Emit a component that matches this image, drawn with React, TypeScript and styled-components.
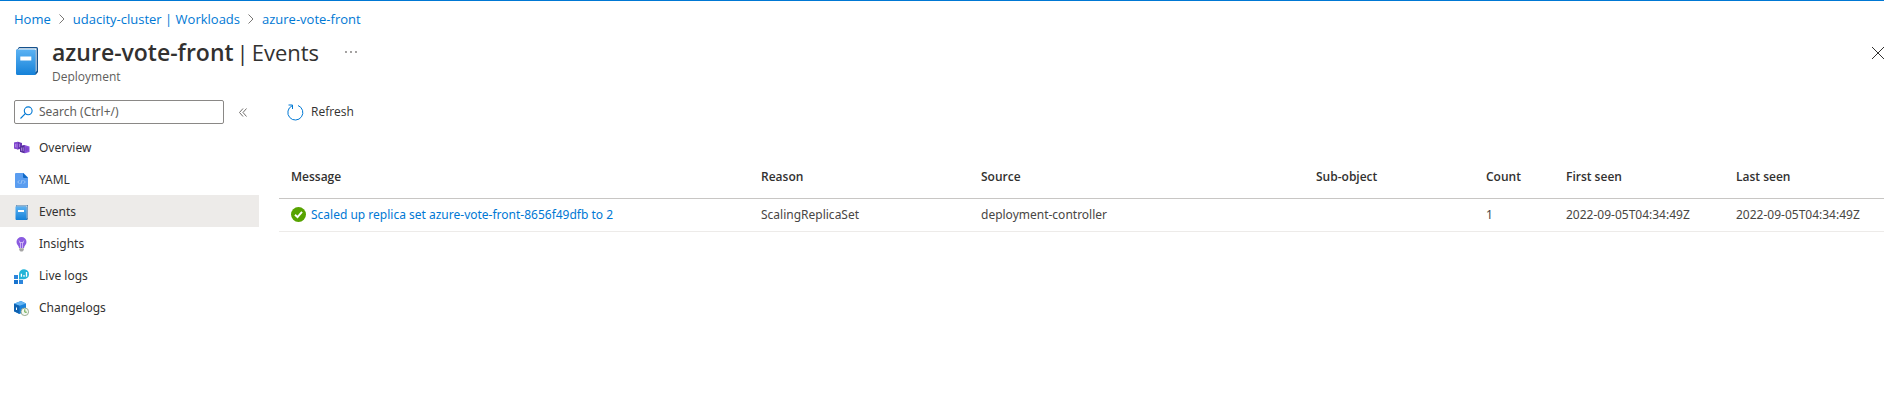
import React from 'react';
import styled, { createGlobalStyle } from 'styled-components';

const compactFont = "'Open Sans', 'Noto Sans', sans-serif";

const GlobalStyle = createGlobalStyle`
  *, *::before, *::after { box-sizing: border-box; }
  body {
    margin: 0;
    background: #fff;
    color: #323130;
    font-family: 'Noto Sans', 'Open Sans', sans-serif;
    font-size: 12px;
    line-height: 16px;
  }
  button, input { font: inherit; color: inherit; }
  svg { display: block; flex: none; }
  a { color: #0078d4; text-decoration: none; }
  a:hover { text-decoration: underline; }
`;

const Blade = styled.div`
  border-top: 1px solid #0078d4;
  overflow: hidden;
`;

const Breadcrumb = styled.nav`
  display: flex;
  align-items: center;
  gap: 8px;
  padding: 10px 14px 0;
  font-family: ${compactFont};
  font-size: 13px;
`;

const Header = styled.header`
  display: flex;
  align-items: flex-start;
  padding: 9px 0 0 16px;
`;

const HeaderIcon = styled.div`
  padding-top: 11px;
  width: 36px;
`;

const HeaderText = styled.div`
  flex: 1;
  font-family: ${compactFont};
`;

const TitleRow = styled.div`
  display: flex;
  align-items: center;
  gap: 26px;
`;

const Title = styled.h1`
  display: flex;
  gap: 3px;
  margin: 0;
  font-size: 22px;
  line-height: 32px;
  font-weight: 400;
`;

const TitleName = styled.span`
  font-size: 23px;
  font-weight: 600;
`;

const Subtitle = styled.div`
  line-height: 18px;
  color: #605e5c;
`;

const IconButton = styled.button`
  display: flex;
  padding: 0;
  border: 0;
  background: none;
  cursor: pointer;
`;

const CloseButton = styled(IconButton)`
  margin-top: 11px;
`;

const Body = styled.div`
  display: flex;
  gap: 20px;
  padding-top: 14px;
`;

const Sidebar = styled.aside`
  width: 259px;
  flex: none;
`;

const SearchRow = styled.div`
  display: flex;
  align-items: center;
  gap: 15px;
  padding-left: 14px;
`;

const SearchBox = styled.label`
  display: flex;
  align-items: center;
  gap: 6px;
  width: 210px;
  height: 24px;
  padding: 0 5px;
  border: 1px solid #8a8886;
  border-radius: 2px;
`;

const SearchInput = styled.input`
  flex: 1;
  min-width: 0;
  padding: 0;
  border: 0;
  outline: 0;
  background: none;
  &::placeholder { color: #605e5c; opacity: 1; }
`;

const Menu = styled.ul`
  margin: 0;
  padding: 7px 0 0;
  list-style: none;
`;

const MenuLink = styled.a<{ $active?: boolean }>`
  display: flex;
  align-items: center;
  gap: 9px;
  height: 32px;
  padding: 2px 0 0 13px;
  color: #323130;
  background: ${(p) => (p.$active ? '#edebe9' : 'transparent')};
`;

const Content = styled.main`
  flex: 1;
  min-width: 0;
`;

const Toolbar = styled.div`
  display: flex;
  height: 24px;
  padding-left: 8px;
`;

const ToolbarButton = styled(IconButton)`
  align-items: center;
  gap: 7px;
  font-family: ${compactFont};
`;

const Table = styled.table`
  width: 100%;
  margin-top: 32px;
  table-layout: fixed;
  border-collapse: collapse;
`;

const Column = styled.col<{ $width?: number }>`
  width: ${(p) => (p.$width ? `${p.$width}px` : 'auto')};
`;

const Th = styled.th`
  height: 42px;
  padding: 0 0 0 12px;
  text-align: left;
  font-family: ${compactFont};
  font-weight: 600;
  white-space: nowrap;
  border-bottom: 1px solid #c8c6c4;
`;

const Td = styled.td`
  height: 33px;
  padding: 0 0 0 12px;
  white-space: nowrap;
  color: #484644;
  border-bottom: 1px solid #edebe9;
`;

const Message = styled.span`
  display: flex;
  align-items: center;
  gap: 5px;
`;

const ChevronIcon = () => (
  <svg width="6" height="10" viewBox="0 0 6 10" fill="none" stroke="#797775" aria-hidden="true">
    <path d="M0.500 0.500 5 5 0.500 9.500" />
  </svg>
);

const BookIcon = ({ width, height }: { width: number; height: number }) => (
  <svg width={width} height={height} viewBox="0 0 22 28" aria-hidden="true">
    <defs>
      <linearGradient id="book" x1="0" y1="0" x2="0" y2="1">
        <stop offset="0" stopColor="#5bb2f3" />
        <stop offset="1" stopColor="#1581d8" />
      </linearGradient>
    </defs>
    <path d="M3 0H20.500a1.500 1.500 0 0 1 1.500 1.500V25l-2 2.500H1V3Z" fill="#15518c" />
    <path d="M3.200 1.200H20.600V24l-1.200 1.500V3H1.500Z" fill="#f3f8fc" />
    <path d="M0 2.600H18.500a1 1 0 0 1 1 1V28H1.500A1.500 1.500 0 0 1 0 26.500Z" fill="url(#book)" />
    <rect x="4.300" y="9.500" width="11" height="4" fill="#fff" />
  </svg>
);

const MoreIcon = () => (
  <svg width="12" height="4" viewBox="0 0 12 4" fill="#797775" aria-hidden="true">
    <circle cx="1" cy="2" r="0.900" />
    <circle cx="6" cy="2" r="0.900" />
    <circle cx="11" cy="2" r="0.900" />
  </svg>
);

const CloseIcon = () => (
  <svg width="12" height="12" viewBox="0 0 12 12" fill="none" stroke="#323130" aria-hidden="true">
    <path d="M0 0 12 12M12 0 0 12" />
  </svg>
);

const SearchIcon = () => (
  <svg width="13" height="13" viewBox="0 0 13 13" fill="none" stroke="#0078d4" strokeWidth="1.100" aria-hidden="true">
    <circle cx="8.200" cy="4.800" r="3.900" />
    <path d="M5.300 7.700 0.500 12.500" />
  </svg>
);

const CollapseIcon = () => (
  <svg width="8" height="9" viewBox="0 0 8 9" fill="none" stroke="#605e5c" strokeWidth="0.900" aria-hidden="true">
    <path d="M4 0.500 0.500 4.500 4 8.500M7.500 0.500 4 4.500 7.500 8.500" />
  </svg>
);

const RefreshIcon = () => (
  <svg width="17" height="17" viewBox="0 0 17 17" fill="none" stroke="#0078d4" aria-hidden="true">
    <path d="M11 1.500A7.500 7.500 0 1 1 5 1.800" />
    <path d="M1.500 1H5.500V5" />
  </svg>
);

const SuccessIcon = () => (
  <svg width="15" height="15" viewBox="0 0 15 15" aria-hidden="true">
    <circle cx="7.500" cy="7.500" r="7.500" fill="#57a300" />
    <path d="M4 7.800 6.500 10.200 11 4.800" fill="none" stroke="#fff" strokeWidth="1.900" />
  </svg>
);

const OverviewIcon = () => (
  <svg width="17" height="17" viewBox="0 0 17 17" aria-hidden="true">
    <path d="M1 2.800 5 1.800 9 3.100V8.500L5 9.500 1 8.200Z" fill="#6a35b5" />
    <path d="M1 2.800 5 1.800V9.500L1 8.200Z" fill="#8248cf" />
    <path d="M2.500 4V7.200M4 3.800V7.600M6.500 3.800V7" stroke="#c9a6f2" strokeWidth="0.600" />
    <path d="M7 6.200 11.500 5 16.500 6.500V12L12 13.200 7 11.700Z" fill="#8c52dc" />
    <path d="M7 6.200 11.500 5V13.200L7 11.700Z" fill="#552f99" />
    <path d="M8.500 7.600V10.800M10.200 7.400V11.200" stroke="#c9a6f2" strokeWidth="0.700" />
    <path d="M13.200 7.300V11.200M14.900 7.500V10.800" stroke="#6a35b5" strokeWidth="0.600" />
  </svg>
);

const YamlIcon = () => (
  <svg width="17" height="17" viewBox="0 0 17 17" aria-hidden="true">
    <path d="M3 1H10.500L15 5.500V15a1 1 0 0 1-1 1H3a1 1 0 0 1-1-1V2a1 1 0 0 1 1-1Z" fill="#5a9df0" />
    <path d="M10 1 15 6H11a1 1 0 0 1-1-1Z" fill="#0f68c4" />
    <path d="M6.300 8.300 4.700 10 6.300 11.700M10.700 8.300 12.300 10 10.700 11.700M9.200 8 7.800 12" fill="none" stroke="#b9d8fa" strokeWidth="0.700" />
  </svg>
);

const EventsIcon = () => (
  <svg width="17" height="17" viewBox="0 0 17 17" aria-hidden="true">
    <defs>
      <linearGradient id="events" x1="0" y1="0" x2="0" y2="1">
        <stop offset="0" stopColor="#5bb2f3" />
        <stop offset="1" stopColor="#1581d8" />
      </linearGradient>
    </defs>
    <path d="M3.500 1H15V15L14 16H3V2Z" fill="#3b6d9d" />
    <path d="M4 1.600H14.400V14.500H13.500V2.600H3Z" fill="#e8f2fa" />
    <path d="M2.500 2.500H13a.5.5 0 0 1 .5.5V16H3.500a1 1 0 0 1-1-1Z" fill="url(#events)" />
    <rect x="5" y="6" width="6" height="2" fill="#fff" />
  </svg>
);

const InsightsIcon = () => (
  <svg width="17" height="17" viewBox="0 0 17 17" aria-hidden="true">
    <path d="M8.500 1a5 5 0 0 1 5 5c0 2.700-2.200 3.300-2.500 6H6C5.700 9.300 3.500 8.700 3.500 6a5 5 0 0 1 5-5Z" fill="#8a5be0" />
    <path d="M7.500 12V7L6 4.500M9.500 12V7L11 4.500M6.500 6.500H10.500" fill="none" stroke="#d9c5f7" strokeWidth="0.800" />
    <path d="M6.200 12.300H10.800V14L9.500 15.500H7.500L6.200 14Z" fill="#a5a5a5" />
  </svg>
);

const LiveLogsIcon = () => (
  <svg width="17" height="17" viewBox="0 0 17 17" aria-hidden="true">
    <rect x="1" y="7" width="4" height="4" fill="#2d86dc" />
    <rect x="1" y="12" width="4" height="4" fill="#1773cf" />
    <rect x="6" y="12" width="4" height="4" fill="#2d86dc" />
    <path d="M6 11.500V6a5 5 0 1 1 5 5.300H8Z" fill="#21b4d8" />
    <path d="M8.400 5.800V8.700M11 7V8.700M13.500 4V8.700" stroke="#fff" strokeWidth="1.300" />
  </svg>
);

const ChangelogsIcon = () => (
  <svg width="17" height="17" viewBox="0 0 17 17" aria-hidden="true">
    <path d="M1 3.800 8 1 13 3.500V11L6.500 14 1 11.300Z" fill="#1b82da" />
    <path d="M1 3.800 8 1 13 3.500 6.500 5.800Z" fill="#65b5f3" />
    <path d="M1 3.800 6.500 5.800V14L1 11.300Z" fill="#0f62b1" />
    <path d="M3.500 7.500V10" stroke="#fff" strokeWidth="1" />
    <circle cx="11.800" cy="11.800" r="3.800" fill="#f5f8f2" stroke="#91a68a" strokeWidth="0.900" />
    <path d="M11.800 9.300V12.200H13.800" fill="none" stroke="#4d9a2d" strokeWidth="0.900" />
  </svg>
);

const menu = [
  { label: 'Overview', Icon: OverviewIcon },
  { label: 'YAML', Icon: YamlIcon },
  { label: 'Events', Icon: EventsIcon },
  { label: 'Insights', Icon: InsightsIcon },
  { label: 'Live logs', Icon: LiveLogsIcon },
  { label: 'Changelogs', Icon: ChangelogsIcon },
];

const columns: { label: string; width?: number }[] = [
  { label: 'Message' },
  { label: 'Reason', width: 220 },
  { label: 'Source', width: 335 },
  { label: 'Sub-object', width: 170 },
  { label: 'Count', width: 80 },
  { label: 'First seen', width: 170 },
  { label: 'Last seen', width: 160 },
];

const events = [
  {
    message: 'Scaled up replica set azure-vote-front-8656f49dfb to 2',
    reason: 'ScalingReplicaSet',
    source: 'deployment-controller',
    subObject: '',
    count: 1,
    firstSeen: '2022-09-05T04:34:49Z',
    lastSeen: '2022-09-05T04:34:49Z',
  },
];

export default function App() {
  return (
    <>
      <GlobalStyle />
      <Blade>
        <Breadcrumb aria-label="Breadcrumb">
          <a href="#home">Home</a>
          <ChevronIcon />
          <a href="#workloads">udacity-cluster | Workloads</a>
          <ChevronIcon />
          <a href="#deployment">azure-vote-front</a>
        </Breadcrumb>
        <Header>
          <HeaderIcon>
            <BookIcon width={22} height={28} />
          </HeaderIcon>
          <HeaderText>
            <TitleRow>
              <Title>
                <TitleName>azure-vote-front</TitleName>
                <span>|</span>
                <span>Events</span>
              </Title>
              <IconButton aria-label="More"><MoreIcon /></IconButton>
            </TitleRow>
            <Subtitle>Deployment</Subtitle>
          </HeaderText>
          <CloseButton aria-label="Close"><CloseIcon /></CloseButton>
        </Header>
        <Body>
          <Sidebar>
            <SearchRow>
              <SearchBox>
                <SearchIcon />
                <SearchInput type="text" aria-label="Search" placeholder="Search (Ctrl+/)" />
              </SearchBox>
              <IconButton aria-label="Collapse menu"><CollapseIcon /></IconButton>
            </SearchRow>
            <Menu>
              {menu.map(({ label, Icon }) => (
                <li key={label}>
                  <MenuLink href={`#${label}`} $active={label === 'Events'}>
                    <Icon />
                    {label}
                  </MenuLink>
                </li>
              ))}
            </Menu>
          </Sidebar>
          <Content>
            <Toolbar>
              <ToolbarButton>
                <RefreshIcon />
                Refresh
              </ToolbarButton>
            </Toolbar>
            <Table>
              <colgroup>
                {columns.map((c) => <Column key={c.label} $width={c.width} />)}
              </colgroup>
              <thead>
                <tr>{columns.map((c) => <Th key={c.label} scope="col">{c.label}</Th>)}</tr>
              </thead>
              <tbody>
                {events.map((e) => (
                  <tr key={e.message}>
                    <Td>
                      <Message>
                        <SuccessIcon />
                        <a href="#event">{e.message}</a>
                      </Message>
                    </Td>
                    <Td>{e.reason}</Td>
                    <Td>{e.source}</Td>
                    <Td>{e.subObject}</Td>
                    <Td>{e.count}</Td>
                    <Td>{e.firstSeen}</Td>
                    <Td>{e.lastSeen}</Td>
                  </tr>
                ))}
              </tbody>
            </Table>
          </Content>
        </Body>
      </Blade>
    </>
  );
}
